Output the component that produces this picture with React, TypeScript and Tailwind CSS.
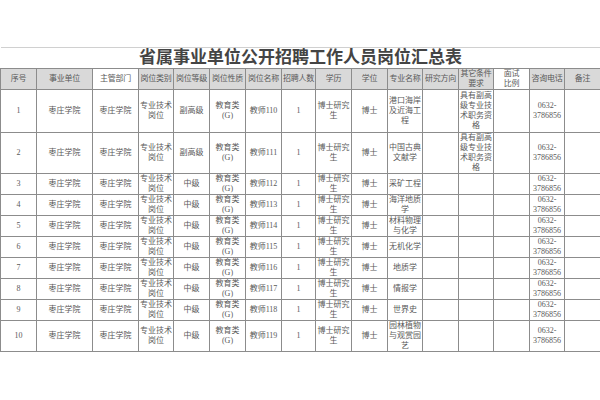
const cols = [36, 56, 46, 35, 36, 36, 36, 34, 36, 36, 35, 36, 35, 36, 35, 36];

const headers: { label: string; lines?: string[]; white?: boolean }[] = [
  { label: '序号' },
  { label: '事业单位' },
  { label: '主管部门', white: true },
  { label: '岗位类别' },
  { label: '岗位等级' },
  { label: '岗位性质' },
  { label: '岗位名称' },
  { label: '招聘人数' },
  { label: '学历' },
  { label: '学位' },
  { label: '专业名称' },
  { label: '研究方向' },
  { label: '其它条件要求', lines: ['其它条件', '要求'] },
  { label: '面试比例', lines: ['面试', '比例'], white: true },
  { label: '咨询电话' },
  { label: '备注' },
];

const rows = [
  { h: 'h-[43px]', level: '副高级', name: '教师110', major: '港口海岸及近海工程', other: '具有副高级专业技术职务资格' },
  { h: 'h-[41px]', level: '副高级', name: '教师111', major: '中国古典文献学', other: '具有副高级专业技术职务资格' },
  { h: 'h-[21px]', level: '中级', name: '教师112', major: '采矿工程', other: '' },
  { h: 'h-[21px]', level: '中级', name: '教师113', major: '海洋地质学', other: '' },
  { h: 'h-[21px]', level: '中级', name: '教师114', major: '材料物理与化学', other: '' },
  { h: 'h-[21px]', level: '中级', name: '教师115', major: '无机化学', other: '' },
  { h: 'h-[21px]', level: '中级', name: '教师116', major: '地质学', other: '' },
  { h: 'h-[21px]', level: '中级', name: '教师117', major: '情报学', other: '' },
  { h: 'h-[21px]', level: '中级', name: '教师118', major: '世界史', other: '' },
  { h: 'h-[31px]', level: '中级', name: '教师119', major: '园林植物与观赏园艺', other: '' },
];

const cell = 'border border-[#8c8c8c] p-0 text-center align-middle leading-[10px] break-all overflow-hidden';

export default function App() {
  return (
    <div className="w-[600px] h-[400px] bg-white overflow-hidden font-['Liberation_Serif','Noto_Sans_CJK_SC',serif] text-[8px] text-[#5a5a5a]">
      <table className="mt-[47px] w-[600px] table-fixed border-collapse">
        <colgroup>
          {cols.map((w, i) => (
            <col key={i} style={{ width: w }} />
          ))}
        </colgroup>
        <tbody>
          {/* Title */}
          <tr className="h-[21px]">
            <td colSpan={16} className="border-t border-[#d0d0d0] text-center align-middle text-[17px] leading-[20px] font-bold text-[#444]">
              省属事业单位公开招聘工作人员岗位汇总表
            </td>
          </tr>

          {/* Header */}
          <tr className="h-[21px]">
            {headers.map((c) => (
              <td
                key={c.label}
                className={`${cell} tracking-[-0.3px] whitespace-nowrap ${c.white ? 'bg-white' : 'bg-[#d9d9d9]'}`}
              >
                {c.lines ? c.lines.map((l) => <div key={l}>{l}</div>) : c.label}
              </td>
            ))}
          </tr>

          {rows.map((r, i) => (
            <tr key={i} className={r.h}>
              <td className={cell}>{i + 1}</td>
              <td className={cell}>枣庄学院</td>
              <td className={cell}>枣庄学院</td>
              <td className={cell}>专业技术岗位</td>
              <td className={cell}>{r.level}</td>
              <td className={cell}>
                <div>教育类</div>
                <div>(G)</div>
              </td>
              <td className={cell}>{r.name}</td>
              <td className={cell}>1</td>
              <td className={cell}>博士研究生</td>
              <td className={cell}>博士</td>
              <td className={cell}>{r.major}</td>
              <td className={cell}></td>
              <td className={cell}>{r.other}</td>
              <td className={cell}></td>
              <td className="border border-[#8c8c8c] p-0 text-center align-middle leading-[10px] text-[#5a5a5a]">
                0632-
                <br />
                3786856
              </td>
              <td className={cell}></td>
            </tr>
          ))}
        </tbody>
      </table>
    </div>
  );
}
